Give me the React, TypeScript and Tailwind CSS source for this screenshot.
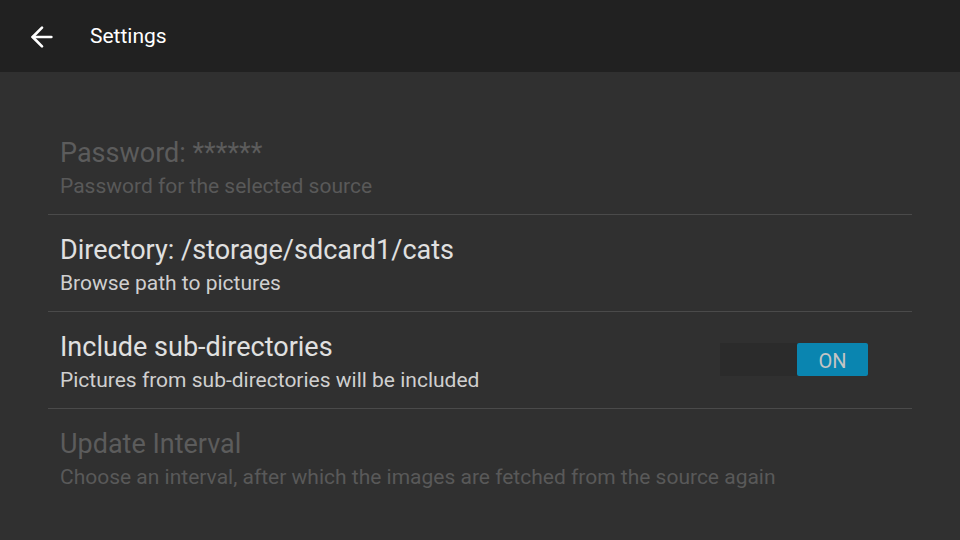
import { ArrowLeft } from "lucide-react";

type Pref = {
  title: string;
  summary: string;
  disabled?: boolean;
  toggle?: boolean;
};

const prefs: Pref[] = [
  { title: "Password: ******", summary: "Password for the selected source", disabled: true },
  { title: "Directory: /storage/sdcard1/cats", summary: "Browse path to pictures" },
  { title: "Include sub-directories", summary: "Pictures from sub-directories will be included", toggle: true },
  {
    title: "Update Interval",
    summary: "Choose an interval, after which the images are fetched from the source again",
    disabled: true,
  },
];

export default function App() {
  return (
    <div className="w-[960px] h-[540px] overflow-hidden bg-[#303030] font-['Roboto',sans-serif] flex flex-col">
      <div className="h-[72px] bg-[#212121] flex items-center pl-[26px] pt-[2px] shrink-0">
        <ArrowLeft className="w-[32px] h-[32px] text-white" strokeWidth={2} />
        <span className="ml-[32px] text-[21px] text-white">Settings</span>
      </div>

      <div className="pt-[46px] px-[48px]">
        {prefs.map((p, i) => (
          <div
            key={p.title}
            className={`h-[97px] flex items-start pl-[12px] pr-[44px] ${
              i < prefs.length - 1 ? "border-b border-[#4a4a4a]" : ""
            }`}
          >
            <div className="flex-1 pt-[19px]">
              <div
                className={`text-[27px] leading-[32px] ${p.disabled ? "text-[#5c5c5c]" : "text-[#e0e0e0]"}`}
              >
                {p.title}
              </div>
              <div
                className={`text-[21px] leading-[26px] mt-[4px] ${p.disabled ? "text-[#595959]" : "text-[#cfcfcf]"}`}
              >
                {p.summary}
              </div>
            </div>
            {p.toggle && (
              <div className="mt-[31px] w-[148px] h-[33px] bg-[#2b2b2b] flex justify-end">
                <div className="w-[71px] h-full bg-[#0a85b0] rounded-[2px] flex items-center justify-center pt-[2px] text-[20px] text-[#c4c4c4]">
                  ON
                </div>
              </div>
            )}
          </div>
        ))}
      </div>
    </div>
  );
}
